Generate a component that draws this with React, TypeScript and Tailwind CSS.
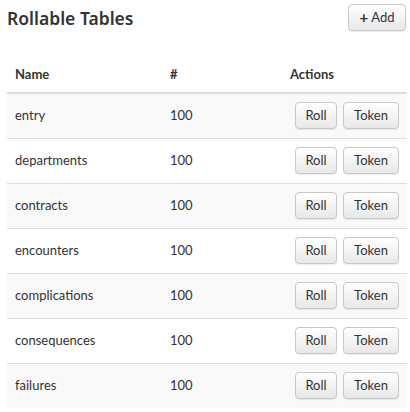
import React from "react";

const rows = ["entry", "departments", "contracts", "encounters", "complications", "consequences", "failures"];

function Btn({ children, className = "" }: { children: React.ReactNode; className?: string }) {
  return (
    <button
      className={`h-[27px] rounded-[4px] border border-[#c8c8c8] bg-gradient-to-b from-[#ffffff] to-[#e8e8e8] text-[13px] text-[#333] shadow-[0_1px_1px_rgba(0,0,0,0.08)] ${className}`}
    >
      {children}
    </button>
  );
}

export default function App() {
  return (
    <div className="w-[410px] h-[412px] bg-white text-[#333] font-['Lato','Noto_Sans',sans-serif] overflow-hidden">
      <div className="flex items-start justify-between pl-[7px] pr-[4px] pt-[4px]">
        <h1 className="text-[17.5px] font-semibold leading-[28px] text-[#333] font-['Noto_Sans',sans-serif]">Rollable Tables</h1>
        <Btn className="w-[58px] flex items-center justify-center gap-[3px]">
          <span className="font-bold text-[15px] leading-none">+</span>
          <span>Add</span>
        </Btn>
      </div>
      <table className="ml-[7px] mt-[26px] w-[400px] border-collapse text-[13px]">
        <thead>
          <tr className="border-b-2 border-[#ddd]">
            <th className="text-left font-bold pl-[8px] h-[35px] align-middle w-[163px]">Name</th>
            <th className="text-left font-bold w-[120px]">#</th>
            <th className="text-left font-bold">Actions</th>
          </tr>
        </thead>
        <tbody>
          {rows.map((r, i) => (
            <tr key={r} className={`h-[45px] ${i > 0 ? "border-t border-[#ddd]" : ""} ${i % 2 === 0 ? "bg-[#f9f9f9]" : "bg-white"}`}>
              <td className="pl-[8px]">{r}</td>
              <td>100</td>
              <td>
                <div className="flex gap-[6px] pl-[5px]">
                  <Btn className="w-[42px]">Roll</Btn>
                  <Btn className="w-[56px]">Token</Btn>
                </div>
              </td>
            </tr>
          ))}
        </tbody>
      </table>
    </div>
  );
}
